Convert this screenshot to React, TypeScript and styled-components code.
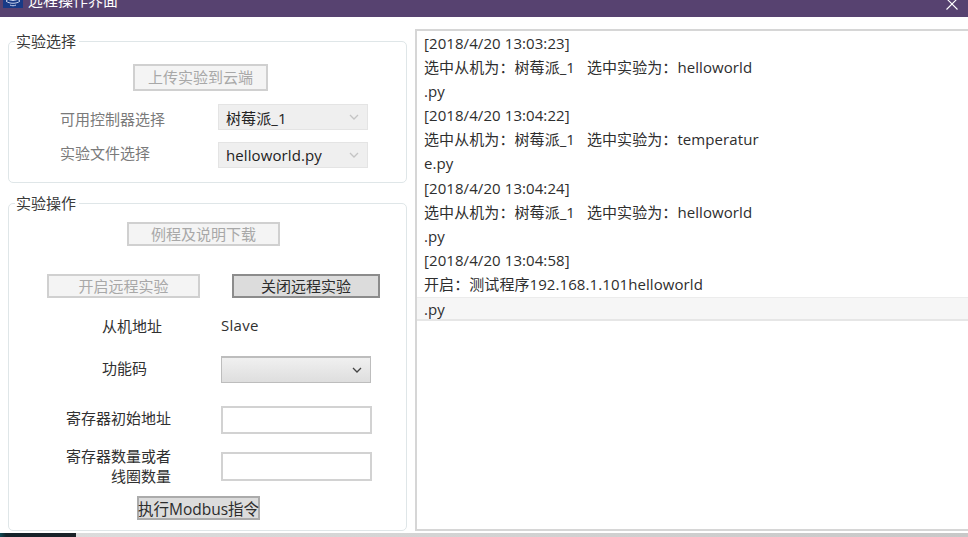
import React from "react";
import styled, { createGlobalStyle, css } from "styled-components";

const Global = createGlobalStyle`
  html, body { margin: 0; padding: 0; background: #fff; overflow: hidden; }
  #root { width: 968px; height: 537px; }
  * { box-sizing: border-box; }
`;

const FONT = `"Open Sans", "Noto Sans CJK SC", sans-serif`;

const Window = styled.div`
  width: 968px;
  height: 537px;
  display: flex;
  flex-direction: column;
  overflow: hidden;
  font-family: ${FONT};
  font-size: 15px;
  color: #333;
  background: #fff;
`;

const TitleBar = styled.div`
  height: 17px;
  flex: none;
  background: #574270;
  overflow: hidden;
  display: flex;
  justify-content: space-between;
  padding: 0 10px 0 3px;
`;

const TitleGroup = styled.div`
  height: 16px;
  margin-top: -8px;
  display: flex;
  align-items: center;
  gap: 5px;
  color: #fff;
  font-size: 15px;
  line-height: 16px;
`;

const CloseBox = styled.div`
  margin-top: -6px;
  height: 12px;
`;

const Body = styled.div`
  flex: 1;
  min-height: 0;
  display: flex;
`;

const LeftColumn = styled.div`
  width: 415px;
  flex: none;
  padding: 24px 8px 0;
  display: flex;
  flex-direction: column;
  gap: 20px;
`;

const Panel = styled.section<{ $height: number; $top: number }>`
  position: relative;
  height: ${(p) => p.$height}px;
  padding-top: ${(p) => p.$top}px;
  border: 1px solid #dfe6e8;
  border-radius: 5px;
`;

const Legend = styled.div`
  position: absolute;
  left: 6px;
  top: -11px;
  padding: 0 3px 0 1px;
  background: #fff;
  font-size: 15px;
  line-height: 20px;
  color: #3a3a3a;
`;

const Btn = styled.div<{ $w: number; $h: number; $active?: boolean; $plain?: boolean }>`
  width: ${(p) => p.$w}px;
  height: ${(p) => p.$h}px;
  flex: none;
  display: flex;
  align-items: center;
  justify-content: center;
  padding-bottom: 2px;
  font-size: 15px;
  border: 2px solid #d0d0d0;
  background: #f4f4f4;
  color: #a8a8a8;
  white-space: nowrap;
  ${(p) =>
    p.$active &&
    css`
      border-color: #8c8c8c;
      background: #dcdcdc;
      color: #2c2c2c;
    `}
  ${(p) =>
    p.$plain &&
    css`
      font-size: 15.5px;
      padding-bottom: 0;
      border-color: #ababab;
      background: #dcdcdc;
      color: #2c2c2c;
    `}
`;

const Row = styled.div<{ $indent: number; $mt?: number; $gap?: number }>`
  display: flex;
  align-items: center;
  padding-left: ${(p) => p.$indent}px;
  margin-top: ${(p) => p.$mt ?? 0}px;
  gap: ${(p) => p.$gap ?? 0}px;
`;

const FieldLabel = styled.div<{ $w: number; $muted?: boolean; $right?: boolean; $down?: number; $up?: number }>`
  width: ${(p) => p.$w}px;
  flex: none;
  padding: ${(p) => p.$down ?? 0}px 0 ${(p) => p.$up ?? 0}px;
  line-height: 20px;
  color: ${(p) => (p.$muted ? "#7a7a7a" : "#303030")};
  text-align: ${(p) => (p.$right ? "right" : "left")};
  white-space: nowrap;
`;

const Select = styled.div<{ $w: number; $h: number; $raised?: boolean }>`
  width: ${(p) => p.$w}px;
  height: ${(p) => p.$h}px;
  flex: none;
  display: flex;
  align-items: center;
  justify-content: space-between;
  padding: 0 8px 0 7px;
  color: #222;
  letter-spacing: 0.1px;
  border: 1px solid ${(p) => (p.$raised ? "#bdbdbd" : "#e4e4e4")};
  background: ${(p) => (p.$raised ? "linear-gradient(#f0f0f0, #dedede)" : "#efefef")};
  ${(p) => p.$raised && "border-width: 2px 1px 1px;"}
`;

const Input = styled.div<{ $h: number }>`
  width: 151px;
  height: ${(p) => p.$h}px;
  flex: none;
  border: 2px solid #d2d2d2;
  background: #fff;
`;

const SlaveText = styled.div`
  padding-bottom: 2px;
  line-height: 20px;
  color: #303030;
  letter-spacing: 0.3px;
`;

const Log = styled.div`
  flex: 1;
  min-width: 0;
  height: 502px;
  margin-top: 12px;
  border: solid #d6d6d6;
  border-width: 2px 0 2px 2px;
  overflow: hidden;
`;

const LogLine = styled.div<{ $selected?: boolean }>`
  height: 24.1px;
  line-height: 24px;
  padding-left: 7px;
  white-space: pre;
  color: #2e2e2e;
  letter-spacing: 0.08px;
  ${(p) =>
    p.$selected &&
    css`
      margin-top: 1px;
      background: #f6f6f6;
      box-shadow: inset 0 -2px 0 #e6e6e6, inset 0 1px 0 #ececec;
    `}
`;

const Footer = styled.div`
  height: 4px;
  flex: none;
  display: flex;
`;

const FooterDark = styled.div`
  width: 76px;
  background: linear-gradient(90deg, #0d4a55 0, #14222a 6px, #1a2228 100%);
`;

const FooterRest = styled.div`
  flex: 1;
  background: linear-gradient(90deg, #dcdcdc, #c8c8c8);
`;

const Chevron = ({ color }: { color: string }) => (
  <svg width="10" height="6" viewBox="0 0 10 6" fill="none">
    <path d="M1 1l4 4 4-4" stroke={color} strokeWidth="1.3" />
  </svg>
);

const Logo = () => (
  <svg width="20" height="16" viewBox="0 0 20 16">
    <rect width="20" height="16" fill="#173a86" />
    <g fill="none" stroke="#c5d0ea" strokeWidth="1">
      <path d="M3 9c3 3 11 3 14 0M5 7c3 2 7 2 10 0M3 9c3-3 11-3 14 0" />
      <path d="M7 13c2 1 4 1 6 0" />
    </g>
  </svg>
);

const lines = [
  "[2018/4/20 13:03:23]",
  "选中从机为：树莓派_1   选中实验为：helloworld",
  ".py",
  "[2018/4/20 13:04:22]",
  "选中从机为：树莓派_1   选中实验为：temperatur",
  "e.py",
  "[2018/4/20 13:04:24]",
  "选中从机为：树莓派_1   选中实验为：helloworld",
  ".py",
  "[2018/4/20 13:04:58]",
  "开启：测试程序192.168.1.101helloworld",
  ".py",
];

export default function App() {
  return (
    <Window>
      <Global />
      <TitleBar>
        <TitleGroup>
          <Logo />
          <span>远程操作界面</span>
        </TitleGroup>
        <CloseBox>
          <svg width="12" height="12" viewBox="0 0 12 12" fill="none">
            <path d="M.5.5l11 11M11.5.5l-11 11" stroke="#fff" strokeWidth="1.1" />
          </svg>
        </CloseBox>
      </TitleBar>
      <Body>
        <LeftColumn>
          <Panel $height={142} $top={22}>
            <Legend>实验选择</Legend>
            <Row $indent={124}>
              <Btn $w={135} $h={27}>上传实验到云端</Btn>
            </Row>
            <Row $indent={51} $mt={13}>
              <FieldLabel $w={158} $muted $down={4}>可用控制器选择</FieldLabel>
              <Select $w={150} $h={26}>
                树莓派_1
                <Chevron color="#c4c4c4" />
              </Select>
            </Row>
            <Row $indent={51} $mt={12}>
              <FieldLabel $w={158} $muted $up={4}>实验文件选择</FieldLabel>
              <Select $w={150} $h={26}>
                helloworld.py
                <Chevron color="#c4c4c4" />
              </Select>
            </Row>
          </Panel>
          <Panel $height={328} $top={18}>
            <Legend>实验操作</Legend>
            <Row $indent={118}>
              <Btn $w={153} $h={24}>例程及说明下载</Btn>
            </Row>
            <Row $indent={38} $mt={28} $gap={32}>
              <Btn $w={153} $h={24}>开启远程实验</Btn>
              <Btn $w={148} $h={24} $active>关闭远程实验</Btn>
            </Row>
            <Row $indent={93} $mt={17}>
              <FieldLabel $w={119}>从机地址</FieldLabel>
              <SlaveText>Slave</SlaveText>
            </Row>
            <Row $indent={93} $mt={19}>
              <FieldLabel $w={119} $up={4}>功能码</FieldLabel>
              <Select $w={150} $h={27} $raised>
                <span />
                <Chevron color="#444" />
              </Select>
            </Row>
            <Row $indent={57} $mt={23} $gap={50}>
              <FieldLabel $w={105} $right $up={4}>寄存器初始地址</FieldLabel>
              <Input $h={28} />
            </Row>
            <Row $indent={57} $mt={12} $gap={50}>
              <FieldLabel $w={105} $right>寄存器数量或者<br />线圈数量</FieldLabel>
              <Input $h={29} />
            </Row>
            <Row $indent={128} $mt={10}>
              <Btn $w={123} $h={24} $plain>执行Modbus指令</Btn>
            </Row>
          </Panel>
        </LeftColumn>
        <Log>
          {lines.map((l, i) => (
            <LogLine key={i} $selected={i === lines.length - 1}>{l}</LogLine>
          ))}
        </Log>
      </Body>
      <Footer>
        <FooterDark />
        <FooterRest />
      </Footer>
    </Window>
  );
}
